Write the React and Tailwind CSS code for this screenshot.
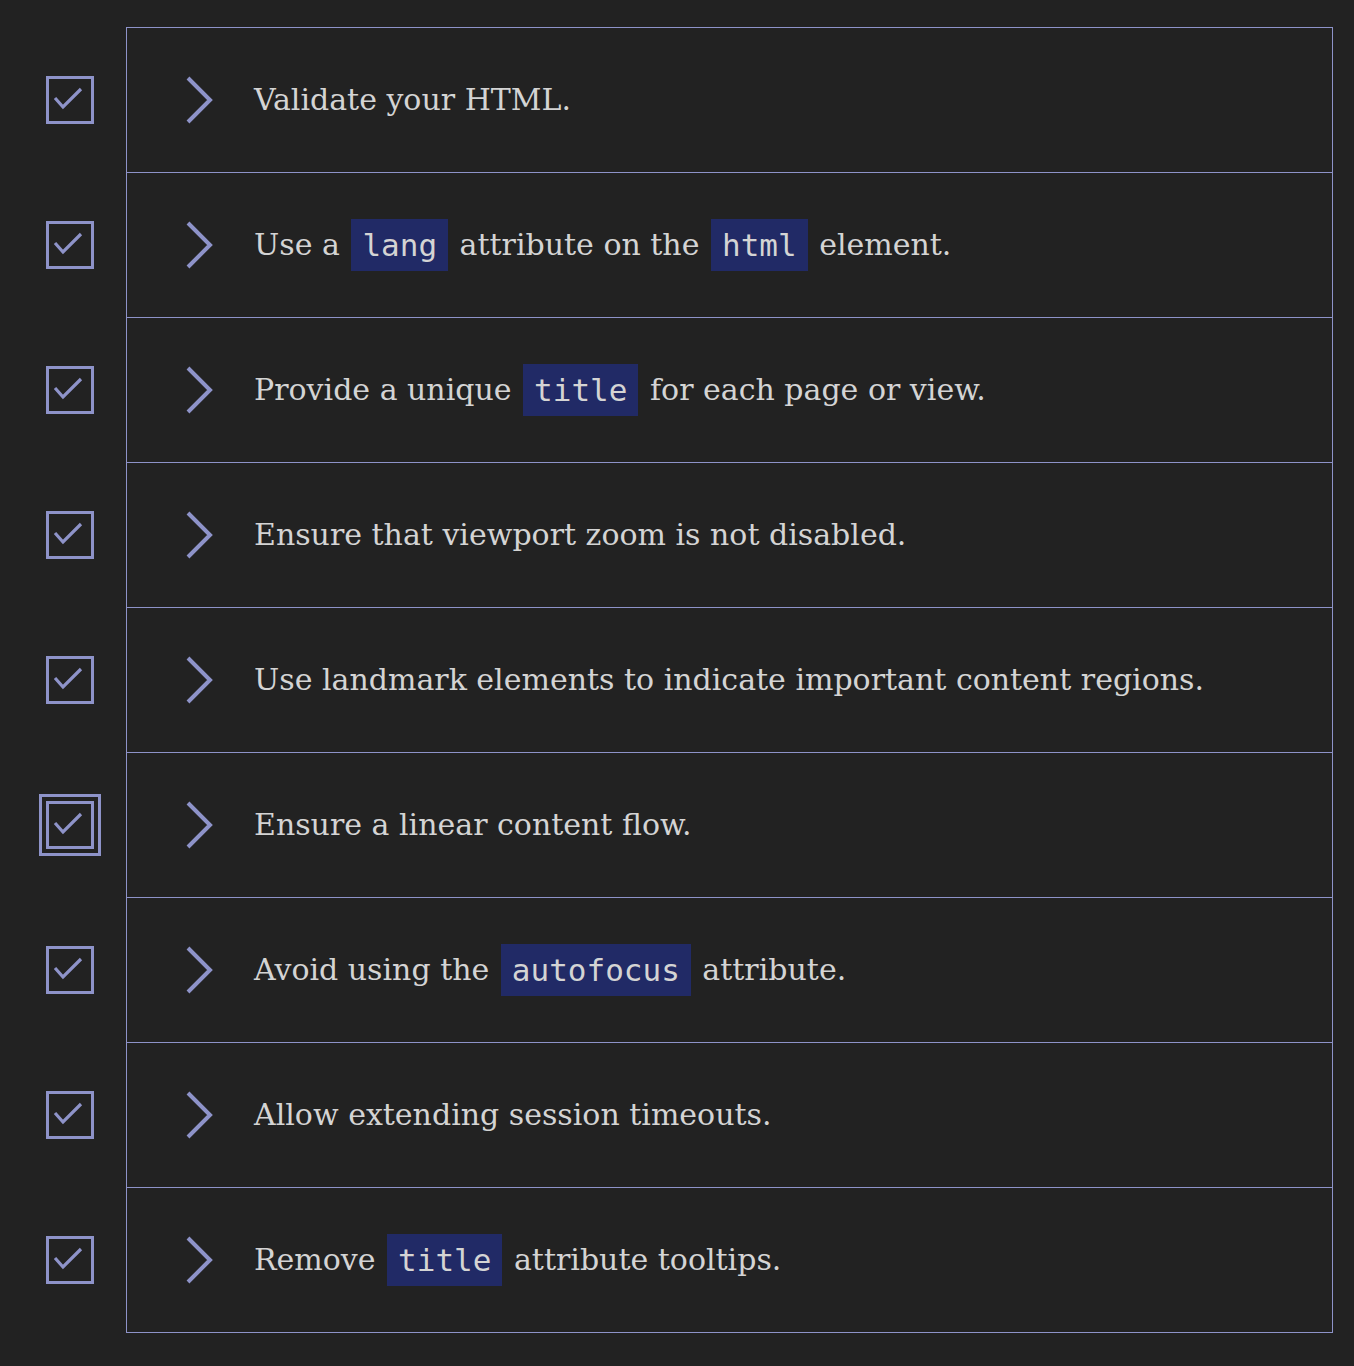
import React from 'react';

const items = [
  ['Validate your HTML.'],
  ['Use a ', { code: 'lang' }, ' attribute on the ', { code: 'html' }, ' element.'],
  ['Provide a unique ', { code: 'title' }, ' for each page or view.'],
  ['Ensure that viewport zoom is not disabled.'],
  ['Use landmark elements to indicate important content regions.'],
  ['Ensure a linear content flow.'],
  ['Avoid using the ', { code: 'autofocus' }, ' attribute.'],
  ['Allow extending session timeouts.'],
  ['Remove ', { code: 'title' }, ' attribute tooltips.'],
];

const Checkbox = ({ focused }) => (
  <div
    className={`w-12 h-12 shrink-0 border-[3px] border-[#8e93c9] ${
      focused ? 'outline-[3px] outline-solid outline-[#8e93c9] outline-offset-[4px]' : ''
    }`}
  >
    <svg width="42" height="42" viewBox="0 0 42 42" fill="none">
      <polyline points="6,19 14,28 32,10" stroke="#8e93c9" strokeWidth="3.2" strokeLinecap="butt" />
    </svg>
  </div>
);

const Chevron = () => (
  <svg width="30" height="48" viewBox="0 0 30 48" fill="none" className="shrink-0">
    <polyline points="3,2 25,24 3,46" stroke="#8e93c9" strokeWidth="4" strokeLinecap="butt" strokeLinejoin="miter" />
  </svg>
);

export default function App() {
  return (
    <div className="min-h-screen bg-[#222222] pt-[27px] pl-[46px] pr-[21px] pb-[34px]" style={{ fontFamily: '"DejaVu Serif", serif' }}>
      {items.map((parts, i) => (
        <div key={i} className="flex items-center">
          <Checkbox focused={i === 5} />
          <div
            className={`ml-8 flex-1 flex items-center h-[145px] border-x border-t border-[#8e93c9] ${
              i === items.length - 1 ? 'border-b h-[146px]' : ''
            }`}
          >
            <div className="ml-[58px] mr-[39px] flex items-center">
              <Chevron />
            </div>
            <p className="text-[30px] leading-[52px] text-[#d4d4d4] whitespace-pre">
              {parts.map((p, j) =>
                typeof p === 'string' ? (
                  <span key={j}>{p}</span>
                ) : (
                  <code
                    key={j}
                    className="inline-block mx-[2px] px-[11px] bg-[#212a66] text-[31px] leading-[52px] align-top"
                    style={{ fontFamily: '"DejaVu Sans Mono", monospace' }}
                  >
                    {p.code}
                  </code>
                )
              )}
            </p>
          </div>
        </div>
      ))}
    </div>
  );
}
